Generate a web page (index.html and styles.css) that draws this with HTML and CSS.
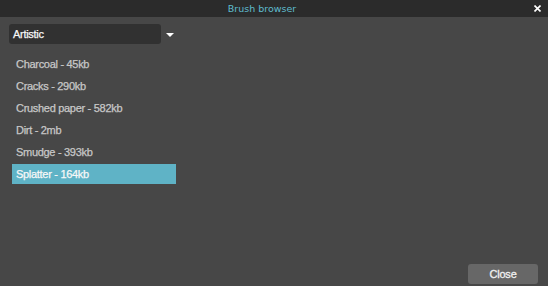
FILE: index.html
```html
<!DOCTYPE html>
<html lang="en">
<head>
    <meta charset="UTF-8">
    <title>Brush browser</title>
    <link rel="stylesheet" href="styles.css">
</head>
<body>
    <div class="titlebar">
        <span class="title">Brush browser</span>
        <span class="close-x">
            <svg width="7" height="7" viewBox="0 0 7 7"><path d="M0.5 0.5L6.5 6.5M6.5 0.5L0.5 6.5" stroke="#fff" stroke-width="1.6"/></svg>
        </span>
    </div>
    <div class="main">
        <div class="sidebar">
            <div class="picker">
                <div class="select">Artistic</div>
                <span class="arrow"></span>
            </div>
            <ul class="brushes">
                <li>Charcoal - 45kb</li>
                <li>Cracks - 290kb</li>
                <li>Crushed paper - 582kb</li>
                <li>Dirt - 2mb</li>
                <li>Smudge - 393kb</li>
                <li class="selected">Splatter - 164kb</li>
            </ul>
        </div>
        <div class="footer">
            <button type="button" class="btn">Close</button>
        </div>
    </div>
</body>
</html>
```

FILE: styles.css
```css
html, body{
    margin: 0;
    height: 100%;
}
body{
    display: flex;
    flex-flow: column;
    background-color: #474747;
    font-family: "Liberation Sans", Arial, sans-serif;
    font-size: 11px;
    letter-spacing: -0.3px;
    -webkit-text-stroke: 0.25px currentColor;
}
.titlebar{
    position: relative;
    height: 17px;
    background-color: #2b2b2b;
    display: flex;
    align-items: center;
    justify-content: center;
}
.title{
    color: #5fbccd;
    font-family: "DejaVu Sans", sans-serif;
    font-size: 9.5px;
    letter-spacing: 0;
    -webkit-text-stroke: 0;
    margin-right: 24px;
}
.close-x{
    position: absolute;
    right: 7px;
    top: 5px;
    display: flex;
}
.main{
    flex: 1;
    display: flex;
    flex-flow: column;
}
.sidebar{
    flex: 1;
    padding: 7px 0 0 9px;
}
.picker{
    display: flex;
    align-items: center;
}
.select{
    width: 148px;
    height: 20px;
    line-height: 20px;
    padding-left: 4px;
    background-color: #313131;
    border-radius: 3px;
    color: #f6f6f6;
}
.arrow{
    margin-left: 5px;
    width: 0;
    height: 0;
    border-left: 4px solid transparent;
    border-right: 4px solid transparent;
    border-top: 4px solid #fff;
    margin-top: 1px;
}
.brushes{
    list-style: none;
    margin: 10px 0 0 3px;
    padding: 0;
    width: 164px;
}
.brushes li{
    height: 20px;
    line-height: 20px;
    padding-left: 4px;
    margin-bottom: 2px;
    color: #c8c8c8;
}
.brushes li.selected{
    background-color: #5fb3c6;
    color: #f8f8f8;
}
.footer{
    display: flex;
    justify-content: flex-end;
    padding: 0 10px 2px 0;
}
.btn{
    width: 70px;
    height: 20px;
    border: none;
    border-radius: 3px;
    background-color: #676767;
    color: #f0f0f0;
    font-family: "Liberation Sans", Arial, sans-serif;
    font-size: 11px;
    letter-spacing: -0.2px;
    -webkit-text-stroke: 0.3px currentColor;
    padding: 0;
}
```
